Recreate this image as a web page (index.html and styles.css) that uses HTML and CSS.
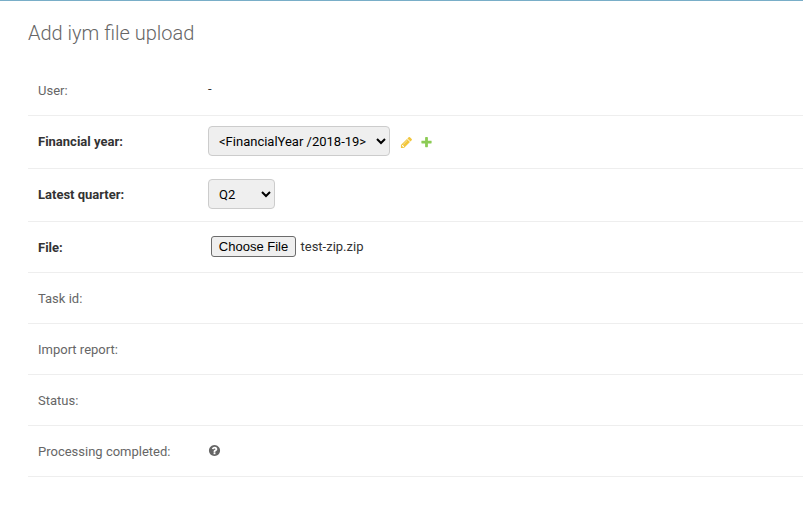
FILE: index.html
```html
<!DOCTYPE html>
<html lang="en">
<head>
<meta charset="utf-8">
<title>Add iym file upload</title>
<link rel="stylesheet" href="styles.css">
</head>
<body>
<main class="content">
  <h1>Add iym file upload</h1>
  <form>
    <div class="form-row text-row first"><label>User:</label><div class="readonly">-</div></div>
    <div class="form-row select-row"><label class="required" for="year">Financial year:</label>
      <select id="year" class="year"><option>&lt;FinancialYear /2018-19&gt;</option></select>
      <a class="related change" href="#" aria-label="Change"><svg width="13" height="13" viewBox="0 0 1792 1792"><path fill="#efb80b" d="M491 1536l91-91-235-235-91 91v107h128v128h107zm523-928q0-22-22-22-10 0-17 7l-542 542q-7 7-7 17 0 22 22 22 10 0 17-7l542-542q7-7 7-17zm-54-192l416 416-832 832h-416v-416zm683 96q0 53-37 90l-166 166-416-416 166-165q36-38 90-38 53 0 91 38l235 234q37 39 37 91z"/></svg></a>
      <a class="related add" href="#" aria-label="Add"><svg width="13" height="13" viewBox="0 0 1792 1792"><path fill="#70bf2b" d="M1600 736v192q0 40-28 68t-68 28h-416v416q0 40-28 68t-68 28h-192q-40 0-68-28t-28-68v-416h-416q-40 0-68-28t-28-68v-192q0-40 28-68t68-28h416v-416q0-40 28-68t68-28h192q40 0 68 28t28 68v416h416q40 0 68 28t28 68z"/></svg></a>
    </div>
    <div class="form-row select-row"><label class="required" for="quarter">Latest quarter:</label>
      <select id="quarter" class="quarter"><option>Q2</option></select></div>
    <div class="form-row text-row"><label class="required">File:</label>
      <div class="file"><button type="button">Choose File</button><span>test-zip.zip</span></div></div>
    <div class="form-row text-row"><label>Task id:</label></div>
    <div class="form-row text-row"><label>Import report:</label></div>
    <div class="form-row text-row"><label>Status:</label></div>
    <div class="form-row text-row"><label>Processing completed:</label>
      <svg class="unknown" width="13" height="13" viewBox="0 0 1792 1792"><path fill="#666" d="M1024 1376v-192q0-14-9-23t-23-9h-192q-14 0-23 9t-9 23v192q0 14 9 23t23 9h192q14 0 23-9t9-23zm256-672q0-88-55.500-163t-138.500-116-170-41q-243 0-371 213-15 24 8 42l132 100q7 6 19 6 16 0 25-12 53-68 86-92 34-24 86-24 48 0 85.500 26t37.500 59q0 38-20 61t-68 45q-63 28-115.500 86.500t-52.500 125.500v36q0 14 9 23t23 9h192q14 0 23-9t9-23q0-19 21.500-49.500t54.500-49.500q32-18 49-28.500t46-35 44.500-48 28-60.500 12.500-81zm384 192q0 209-103 385.500t-279.500 279.500-385.500 103-385.500-103-279.500-279.500-103-385.500 103-385.500 279.500-279.500 385.500-103 385.500 103 279.500 279.500 103 385.500z"/></svg></div>
  </form>
</main>
</body>
</html>
```
FILE: styles.css
```css
* { box-sizing: border-box; }
body {
  margin: 0;
  border-top: 1px solid #79aec8;
  background: #fff;
  color: #333;
  font: 13px Roboto, "Liberation Sans", sans-serif;
  overflow: hidden;
}
.content { padding: 20px 0 0 28px; }
h1 {
  margin: 0 0 19px;
  color: #666;
  font-size: 20px;
  font-weight: 300;
  line-height: 24px;
}
.form-row {
  display: flex;
  align-items: center;
  padding-left: 10px;
  border-bottom: 1px solid #eee;
}
.text-row { height: 51px; }
.first { height: 52px; padding-top: 2px; }
.select-row { height: 53px; padding-bottom: 2px; }
label { width: 170px; color: #666; line-height: 15px; }
.required { color: #333; font-weight: 700; }
.readonly { margin-bottom: 4px; }
select {
  height: 30px;
  padding: 5px 6px;
  border: 1px solid #ccc;
  border-radius: 4px;
  background: #efefef;
  color: #000;
  font: 13px Roboto, "Liberation Sans", sans-serif;
}
.year { width: 182px; }
.quarter { width: 67px; }
.related { height: 13px; margin-top: 2px; opacity: 0.8; }
.change { margin-left: 10px; }
.add { margin-left: 7px; }
.file { display: flex; align-items: center; gap: 4.5px; padding: 0 0 2px 3px; }
.file button {
  width: 85px;
  height: 21px;
  padding: 0;
  border: 1px solid #6b6b6b;
  border-radius: 3px;
  background: #efefef;
  color: #000;
  font: 13px "Liberation Sans", sans-serif;
}
.unknown { margin-bottom: 2px; }
```
